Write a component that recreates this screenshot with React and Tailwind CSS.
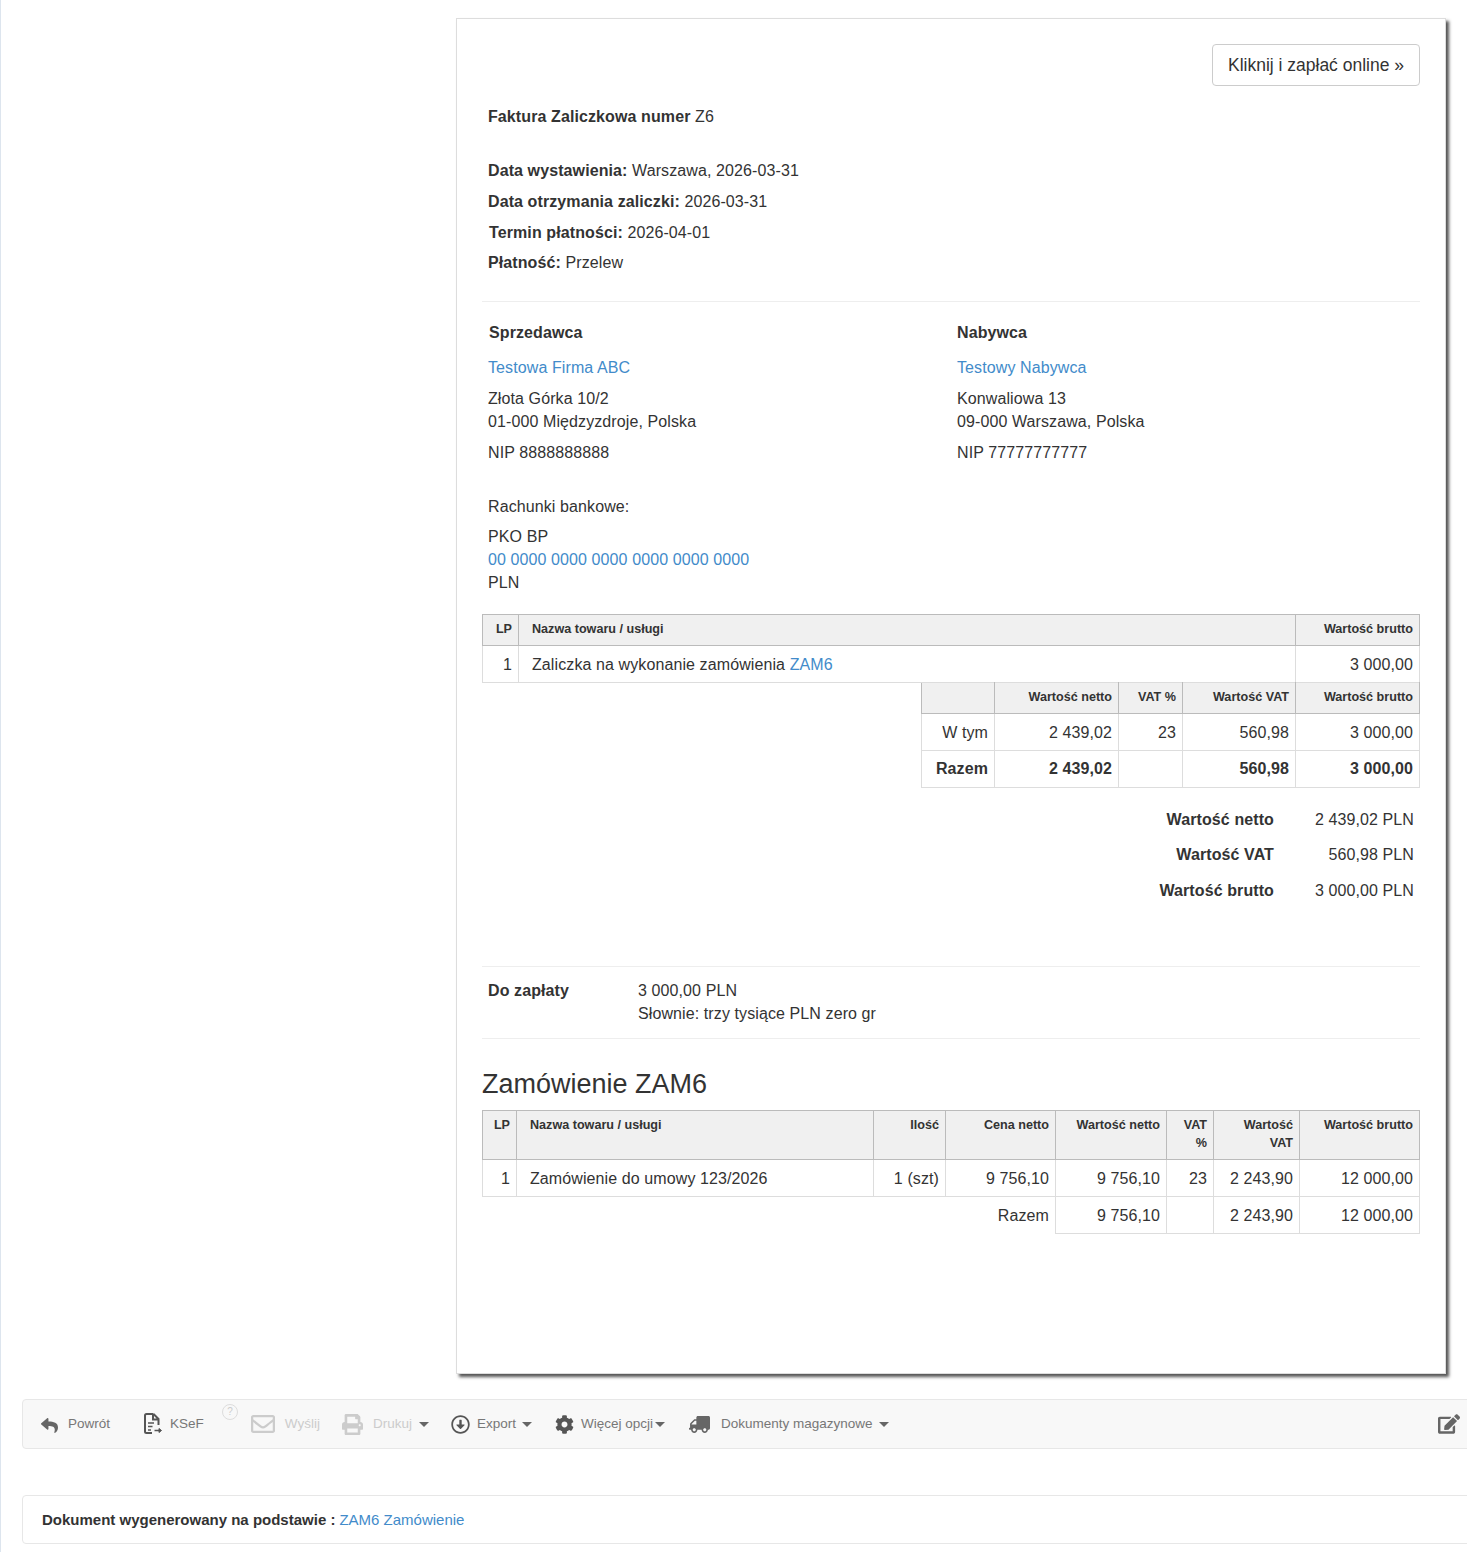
import React from 'react';
import { FaReply, FaRegEnvelope, FaPrint, FaCog, FaTruck, FaEdit, FaRegArrowAltCircleDown } from 'react-icons/fa';

const Caret = ({ className = '' }) => (
  <span className={`inline-block w-0 h-0 border-x-[5px] border-x-transparent border-t-[5px] border-t-[#666] ${className}`} />
);

const KsefIcon = () => (
  <svg width="18" height="22" viewBox="0 0 18 22" fill="none" stroke="#555" strokeWidth="2">
    <path d="M9.500 1H2.500A1.500 1.500 0 0 0 1 2.500v16A1.500 1.500 0 0 0 2.500 20H8" />
    <path d="M9 1v5.500h5.500M9.500 1 14.500 6v6" />
    <path d="M4 10h6M4 13.500h4.500M4 17h3" strokeWidth="1.700" />
    <path d="M10.500 17.500H16" strokeWidth="1.500" />
    <path d="M15 15.500 17.500 17.500 15 19.500z" fill="#555" strokeWidth="1" />
  </svg>
);

const thCls = 'border border-[#bbb] bg-[#f0f0f0] text-[12.6px] tracking-normal font-bold text-[#333] px-[6px] align-top text-right';
const thMid = 'pb-[2px] !align-middle';
const tdCls = 'border border-[#ddd] px-[6px] pt-[1px] text-right align-middle';

const Line = ({ label, value, className = '' }) => (
  <div className={`h-[23px] leading-[23px] ${className}`}>
    <b>{label}</b> {value}
  </div>
);

const Hr = ({ className = '' }) => <div className={`border-t border-[#eee] ${className}`} />;

const Link = ({ children }) => <a className="text-[#428bca]">{children}</a>;

const Summary = ({ label, value, className = '' }) => (
  <div className={`flex justify-end h-[23px] leading-[23px] ${className}`}>
    <b>{label}</b>
    <span className="w-[146px] pr-[6px] text-right">{value}</span>
  </div>
);

export default function App() {
  return (
    <div className="w-[1467px] h-[1552px] overflow-hidden bg-white border-l border-[#dde5ee] text-[16px] tracking-[0.1px] text-[#333] font-['Liberation_Sans',Arial,sans-serif]">
      {/* faktura */}
      <div className="ml-[455px] mt-[18px] w-[990px] h-[1356px] bg-white border border-[#ddd] shadow-[3px_3px_3px_#555] pl-[25px] pr-[25px]">
        <div className="flex justify-end pt-[25px]">
          <button className="w-[208px] h-[42px] border border-[#ccc] rounded-[4px] text-[17.5px] tracking-normal text-[#333] bg-white">
            Kliknij i zapłać online »
          </button>
        </div>

        <div className="pl-[6px] mt-[19px]">
          <Line label="Faktura Zaliczkowa numer" value="Z6" />
          <Line label="Data wystawienia:" value="Warszawa, 2026-03-31" className="mt-[31px]" />
          <Line label="Data otrzymania zaliczki:" value="2026-03-31" className="mt-[8px]" />
          <Line label="Termin płatności:" value="2026-04-01" className="mt-[8px] pl-[1px]" />
          <Line label="Płatność:" value="Przelew" className="mt-[7px]" />
        </div>

        <Hr className="mt-[27px]" />

        <div className="flex mt-[19px] pl-[6px]">
          <div className="w-[469px]">
            <div className="h-[23px] leading-[23px] font-bold pl-[1px]">Sprzedawca</div>
            <div className="h-[23px] leading-[23px] mt-[12px]"><Link>Testowa Firma ABC</Link></div>
            <div className="h-[23px] leading-[23px] mt-[8px]">Złota Górka 10/2</div>
            <div className="h-[23px] leading-[23px]">01-000 Międzyzdroje, Polska</div>
            <div className="h-[23px] leading-[23px] mt-[8px]">NIP 8888888888</div>
          </div>
          <div>
            <div className="h-[23px] leading-[23px] font-bold">Nabywca</div>
            <div className="h-[23px] leading-[23px] mt-[12px]"><Link>Testowy Nabywca</Link></div>
            <div className="h-[23px] leading-[23px] mt-[8px]">Konwaliowa 13</div>
            <div className="h-[23px] leading-[23px]">09-000 Warszawa, Polska</div>
            <div className="h-[23px] leading-[23px] mt-[8px]">NIP 77777777777</div>
          </div>
        </div>

        <div className="pl-[6px] mt-[31px]">
          <div className="h-[23px] leading-[23px]">Rachunki bankowe:</div>
          <div className="h-[23px] leading-[23px] mt-[7px]">PKO BP</div>
          <div className="h-[23px] leading-[23px]"><Link>00 0000 0000 0000 0000 0000 0000</Link></div>
          <div className="h-[23px] leading-[23px]">PLN</div>
        </div>

        {/* pozycje */}
        <table className="mt-[20px] w-[937px] table-fixed border-collapse">
          <colgroup>
            <col className="w-[36px]" />
            <col className="w-[777px]" />
            <col className="w-[124px]" />
          </colgroup>
          <thead>
            <tr className="h-[31px]">
              <th className={`${thCls} ${thMid}`}>LP</th>
              <th className={`${thCls} ${thMid} !text-left pl-[13px]`}>Nazwa towaru / usługi</th>
              <th className={`${thCls} ${thMid}`}>Wartość brutto</th>
            </tr>
          </thead>
          <tbody>
            <tr className="h-[37px]">
              <td className={tdCls}>1</td>
              <td className={`${tdCls} !text-left pl-[13px]`}>Zaliczka na wykonanie zamówienia <Link>ZAM6</Link></td>
              <td className={tdCls}>3 000,00</td>
            </tr>
          </tbody>
        </table>

        <div className="flex justify-end -mt-[1px]">
          <table className="w-[498px] table-fixed border-collapse">
            <colgroup>
              <col className="w-[73px]" />
              <col className="w-[124px]" />
              <col className="w-[64px]" />
              <col className="w-[113px]" />
              <col className="w-[124px]" />
            </colgroup>
            <thead>
              <tr className="h-[31px]">
                <th className={`${thCls} ${thMid} border-t-[#ddd]`}></th>
                <th className={`${thCls} ${thMid} border-t-[#ddd]`}>Wartość netto</th>
                <th className={`${thCls} ${thMid} border-t-[#ddd]`}>VAT %</th>
                <th className={`${thCls} ${thMid} border-t-[#ddd]`}>Wartość VAT</th>
                <th className={`${thCls} ${thMid} border-t-[#ddd]`}>Wartość brutto</th>
              </tr>
            </thead>
            <tbody>
              <tr className="h-[37px]">
                <td className={tdCls}>W tym</td>
                <td className={tdCls}>2 439,02</td>
                <td className={tdCls}>23</td>
                <td className={tdCls}>560,98</td>
                <td className={tdCls}>3 000,00</td>
              </tr>
              <tr className="h-[37px] font-bold">
                <td className={`${tdCls} !pt-0`}>Razem</td>
                <td className={`${tdCls} !pt-0`}>2 439,02</td>
                <td className={`${tdCls} !pt-0`}></td>
                <td className={`${tdCls} !pt-0`}>560,98</td>
                <td className={`${tdCls} !pt-0`}>3 000,00</td>
              </tr>
            </tbody>
          </table>
        </div>

        <div className="mt-[20px]">
          <Summary label="Wartość netto" value="2 439,02 PLN" />
          <Summary label="Wartość VAT" value="560,98 PLN" className="mt-[12px]" />
          <Summary label="Wartość brutto" value="3 000,00 PLN" className="mt-[13px]" />
        </div>

        <Hr className="mt-[64px]" />

        <div className="flex pl-[6px] mt-[12px]">
          <b className="w-[150px] leading-[23px]">Do zapłaty</b>
          <div className="leading-[23px]">
            <div>3 000,00 PLN</div>
            <div>Słownie: trzy tysiące PLN zero gr</div>
          </div>
        </div>

        <Hr className="mt-[13px]" />

        <h2 className="text-[27px] tracking-normal leading-[31px] mt-[30px] text-[#333]">Zamówienie ZAM6</h2>

        {/* zamowienie */}
        <table className="mt-[10px] w-[937px] table-fixed border-collapse">
          <colgroup>
            <col className="w-[34px]" />
            <col className="w-[357px]" />
            <col className="w-[72px]" />
            <col className="w-[110px]" />
            <col className="w-[111px]" />
            <col className="w-[47px]" />
            <col className="w-[86px]" />
            <col className="w-[120px]" />
          </colgroup>
          <thead>
            <tr className="h-[49px] leading-[18px]">
              <th className={`${thCls} pt-[5px]`}>LP</th>
              <th className={`${thCls} pt-[5px] !text-left pl-[13px]`}>Nazwa towaru / usługi</th>
              <th className={`${thCls} pt-[5px]`}>Ilość</th>
              <th className={`${thCls} pt-[5px]`}>Cena netto</th>
              <th className={`${thCls} pt-[5px]`}>Wartość netto</th>
              <th className={`${thCls} pt-[5px]`}>VAT %</th>
              <th className={`${thCls} pt-[5px]`}>Wartość VAT</th>
              <th className={`${thCls} pt-[5px]`}>Wartość brutto</th>
            </tr>
          </thead>
          <tbody>
            <tr className="h-[37px]">
              <td className={tdCls}>1</td>
              <td className={`${tdCls} !text-left pl-[13px]`}>Zamówienie do umowy 123/2026</td>
              <td className={tdCls}>1 (szt)</td>
              <td className={tdCls}>9 756,10</td>
              <td className={tdCls}>9 756,10</td>
              <td className={tdCls}>23</td>
              <td className={tdCls}>2 243,90</td>
              <td className={tdCls}>12 000,00</td>
            </tr>
            <tr className="h-[37px]">
              <td colSpan={4} className="px-[6px] pt-[1px] text-right border-r border-[#ddd]">Razem</td>
              <td className={tdCls}>9 756,10</td>
              <td className={tdCls}></td>
              <td className={tdCls}>2 243,90</td>
              <td className={tdCls}>12 000,00</td>
            </tr>
          </tbody>
        </table>
      </div>

      {/* toolbar */}
      <div className="relative flex items-center ml-[21px] mt-[25px] w-[1460px] h-[50px] bg-[#f8f8f8] border border-[#e7e7e7] rounded-[4px] text-[13.5px] tracking-normal text-[#777]">
        <FaReply className="ml-[18px] mt-[2px] text-[17px] text-[#666]" />
        <span className="ml-[10px]">Powrót</span>
        <span className="ml-[34px]"><KsefIcon /></span>
        <span className="ml-[8px]">KSeF</span>
        <span className="absolute left-[199px] top-[4px] w-[16px] h-[16px] border border-[#ddd] rounded-full text-[10px] leading-[14px] text-center text-[#ccc]">?</span>
        <FaRegEnvelope className="ml-[47px] text-[24px] text-[#ccc]" />
        <span className="ml-[10px] text-[#ccc]">Wyślij</span>
        <FaPrint className="ml-[22px] text-[21px] text-[#ccc]" />
        <span className="ml-[10px] text-[#ccc]">Drukuj</span>
        <Caret className="ml-[7px]" />
        <FaRegArrowAltCircleDown className="ml-[22px] text-[19px] text-[#555]" />
        <span className="ml-[7px]">Export</span>
        <Caret className="ml-[6px]" />
        <FaCog className="ml-[23px] text-[19px] text-[#555]" />
        <span className="ml-[7px]">Więcej opcji</span>
        <Caret className="ml-[2px]" />
        <FaTruck className="ml-[24px] text-[21px] text-[#666] -scale-x-100" />
        <span className="ml-[11px]">Dokumenty magazynowe</span>
        <Caret className="ml-[6px]" />
        <FaEdit className="absolute left-[1415px] top-[13px] text-[22px] text-[#666]" />
      </div>

      <div className="flex items-center ml-[21px] mt-[46px] w-[1460px] h-[49px] bg-white border border-[#e7e7e7] rounded-[4px] pl-[19px] pt-[2px] text-[15px] tracking-normal">
        <b>Dokument wygenerowany na podstawie :</b>
        <span className="ml-[4px]"><Link>ZAM6 Zamówienie</Link></span>
      </div>
    </div>
  );
}
